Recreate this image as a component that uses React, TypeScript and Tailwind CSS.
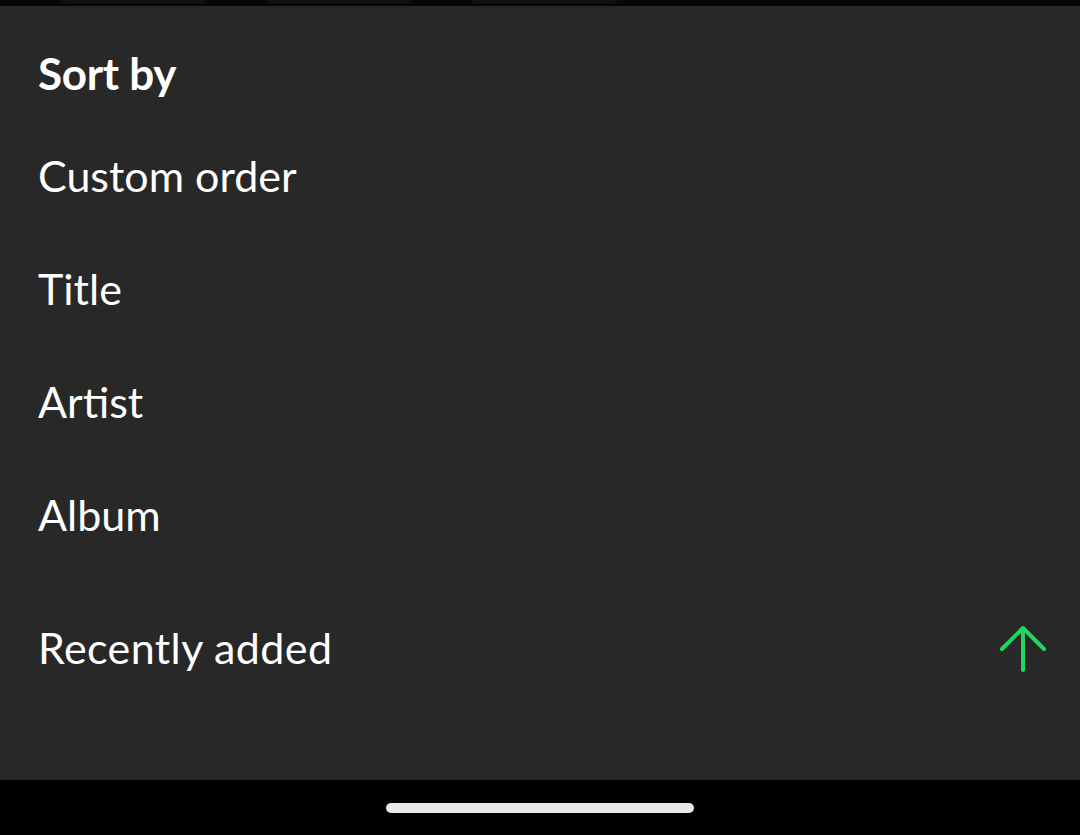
import React from "react";

const options = ["Custom order", "Title", "Artist", "Album"];

function ArrowUp() {
  return (
    <svg width="48" height="48" viewBox="0 0 48 48" fill="none">
      <path
        d="M24 45V4M3 24L24 3L45 24"
        stroke="#1ed760"
        strokeWidth="4"
        strokeLinecap="round"
        strokeLinejoin="round"
      />
    </svg>
  );
}

export default function App() {
  return (
    <div
      className="w-[1080px] h-[835px] flex flex-col bg-black text-white"
      style={{ fontFamily: "Lato, 'Noto Sans', sans-serif" }}
    >
      {/* chips peeking out from behind the sheet */}
      <div className="h-[6px] bg-[#070707] flex gap-[60px] pl-[62px] overflow-hidden">
        <div className="w-[145px] h-[3px] rounded-b-full bg-[#121212]" />
        <div className="w-[145px] h-[3px] rounded-b-full bg-[#121212]" />
        <div className="w-[145px] h-[3px] rounded-b-full bg-[#121212]" />
      </div>

      {/* sort sheet */}
      <div className="flex-1 bg-[#282828] px-[38px] flex flex-col">
        <div className="h-[114px] flex items-center pt-[20px]">
          <h2 className="text-[44px] font-bold tracking-[-0.3px]">Sort by</h2>
        </div>
        {options.map((o) => (
          <div key={o} className="h-[113px] flex items-center">
            <span className="text-[43px]">{o}</span>
          </div>
        ))}
        <div className="mt-[20px] h-[113px] flex items-center justify-between">
          <span className="text-[43px] tracking-[0.4px]">Recently added</span>
          <div className="mr-[-5px]">
            <ArrowUp />
          </div>
        </div>
      </div>

      {/* gesture bar */}
      <div className="h-[55px] bg-black flex items-center justify-center">
        <div className="w-[308px] h-[10px] rounded-full bg-[#e9e9e9]" />
      </div>
    </div>
  );
}
